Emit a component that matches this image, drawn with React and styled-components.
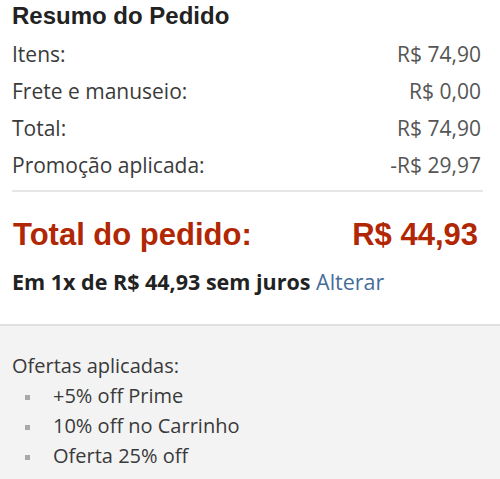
import React from 'react';
import styled, { createGlobalStyle } from 'styled-components';

const GlobalStyle = createGlobalStyle`
  body {
    margin: 0;
    background: #fff;
    font-family: "Open Sans", "Noto Sans", Arial, sans-serif;
  }
`;

const Wrapper = styled.div`
  width: 500px;
  height: 479px;
  overflow: hidden;
  display: flex;
  flex-direction: column;
`;

const Summary = styled.section`
  padding: 0 17px 0 12px;
`;

const Heading = styled.h2`
  margin: 1px 0 5px;
  font-family: "Liberation Sans", Arial, sans-serif;
  font-size: 24px;
  line-height: 30px;
  font-weight: 700;
  color: #222;
`;

const Row = styled.div`
  display: flex;
  justify-content: space-between;
  height: 37px;
  font-size: 21px;
  line-height: 37px;
  color: #3a3a3a;
`;

const Value = styled.span`
  color: #555;
  padding-right: 2px;
`;

const Divider = styled.hr`
  margin: 6px 0 0;
  border: none;
  height: 2px;
  background: #e6e6e6;
`;

const TotalRow = styled.div`
  display: flex;
  justify-content: space-between;
  margin-top: 25px;
  padding: 0 5px 0 1px;
  font-family: "Liberation Sans", Arial, sans-serif;
  font-weight: 700;
  font-size: 31px;
  line-height: 36px;
  color: #b12704;
`;

const Installment = styled.p`
  margin: 16px 0 0;
  font-size: 21.5px;
  line-height: 26px;
  font-weight: 700;
  color: #222;
`;

const Link = styled.a`
  font-weight: 400;
  color: #466d9a;
  text-decoration: none;
`;

const Offers = styled.section`
  flex: 1;
  margin-top: 29px;
  padding: 25px 12px 0;
  background: #f3f3f3;
  border-top: 2px solid #e0e0e0;
`;

const OffersTitle = styled.div`
  font-size: 20px;
  line-height: 30px;
  color: #3a3a3a;
`;

const OfferList = styled.ul`
  margin: 0;
  padding: 0;
  list-style: none;
`;

const OfferItem = styled.li`
  position: relative;
  padding-left: 41px;
  font-size: 20px;
  line-height: 30px;
  color: #3a3a3a;

  &::before {
    content: '';
    position: absolute;
    left: 13px;
    top: 14px;
    width: 5px;
    height: 5px;
    background: #a9a9a9;
  }
`;

const rows = [
  ['Itens:', 'R$ 74,90'],
  ['Frete e manuseio:', 'R$ 0,00'],
  ['Total:', 'R$ 74,90'],
  ['Promoção aplicada:', '-R$ 29,97'],
];

const offers = ['+5% off Prime', '10% off no Carrinho', 'Oferta 25% off'];

export default function App() {
  return (
    <>
      <GlobalStyle />
      <Wrapper>
        <Summary>
          <Heading>Resumo do Pedido</Heading>
          {rows.map(([label, value]) => (
            <Row key={label}>
              <span>{label}</span>
              <Value>{value}</Value>
            </Row>
          ))}
          <Divider />
          <TotalRow>
            <span>Total do pedido:</span>
            <span>R$ 44,93</span>
          </TotalRow>
          <Installment>
            Em 1x de R$ 44,93 sem juros <Link href="#">Alterar</Link>
          </Installment>
        </Summary>
        <Offers>
          <OffersTitle>Ofertas aplicadas:</OffersTitle>
          <OfferList>
            {offers.map((o) => (
              <OfferItem key={o}>{o}</OfferItem>
            ))}
          </OfferList>
        </Offers>
      </Wrapper>
    </>
  );
}
